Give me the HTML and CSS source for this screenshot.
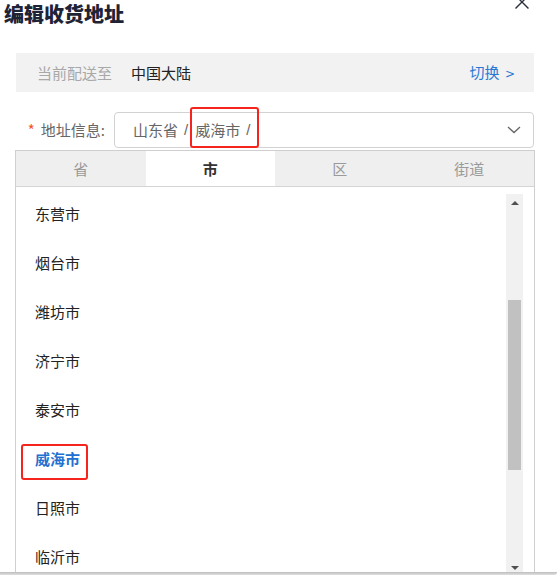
FILE: index.html
```html
<!DOCTYPE html>
<html lang="zh-CN">
<head>
<meta charset="utf-8">
<link rel="stylesheet" href="styles.css">
</head>
<body>
<div class="dialog">
  <h1 class="title">编辑收货地址</h1>
  <svg class="close" width="16" height="16" viewBox="0 0 16 16"><path d="M1.5 1.5 L14.5 14.5 M14.5 1.5 L1.5 14.5" stroke="#2a2d3a" stroke-width="1.4" fill="none"/></svg>
  <div class="content">
    <div class="bar">
      <span class="bar-label">当前配送至</span>
      <span class="bar-value">中国大陆</span>
      <span class="bar-link">切换 <span class="gt">&gt;</span></span>
    </div>
    <div class="form-row">
      <label class="label"><span class="req">*</span>地址信息:</label>
      <div class="select">
        <span class="seg">山东省</span><span class="slash">/</span><span class="hl"><span class="seg">威海市</span><span class="slash">/</span></span>
        <svg class="chev" width="14" height="8" viewBox="0 0 14 8"><path d="M1 1 L7 6.5 L13 1" stroke="#666" stroke-width="1.3" fill="none"/></svg>
      </div>
    </div>
    <div class="panel">
      <div class="tabs">
        <div class="tab">省</div>
        <div class="tab active">市</div>
        <div class="tab">区</div>
        <div class="tab">街道</div>
      </div>
      <div class="list-wrap">
        <ul class="list">
          <li class="item">东营市</li>
          <li class="item">烟台市</li>
          <li class="item">潍坊市</li>
          <li class="item">济宁市</li>
          <li class="item">泰安市</li>
          <li class="item selected"><span class="sel-box">威海市</span></li>
          <li class="item">日照市</li>
          <li class="item">临沂市</li>
        </ul>
        <div class="scrollbar">
          <span class="arrow up"></span>
          <span class="thumb"></span>
          <span class="arrow down"></span>
        </div>
      </div>
    </div>
  </div>
  <div class="bottom-edge"></div>
</div>
</body>
</html>
```

FILE: styles.css
```css
* { box-sizing: border-box; }
html, body {
  margin: 0;
  padding: 0;
  background: #fff;
}
body {
  width: 557px;
  height: 575px;
  overflow: hidden;
  font-family: "Noto Sans CJK SC", "Microsoft YaHei", sans-serif;
  color: #333;
}
.dialog {
  position: relative;
  width: 557px;
  height: 575px;
  overflow: hidden;
}
.title {
  margin: 0;
  padding: 2px 0 0 4px;
  font-size: 20px;
  line-height: 24px;
  font-weight: 900;
  color: #1f2336;
  height: 26px;
}
.close {
  position: absolute;
  top: -6px;
  right: 27px;
}
.content {
  padding: 0 23px 0 16px;
}
.bar {
  margin-top: 27px;
  height: 39px;
  background: #f2f2f2;
  display: flex;
  align-items: center;
  padding: 0 19px 0 21px;
  font-size: 15px;
  line-height: 20px;
}
.bar-label {
  color: #a8a8a8;
  margin-right: 19px;
}
.bar-value {
  color: #222;
}
.bar-link {
  margin-left: auto;
  color: #2a78d4;
}
.bar-link .gt {
  font-family: "DejaVu Sans", sans-serif;
  font-size: 12px;
  margin-left: 2px;
}
.form-row {
  margin-top: 20px;
  display: flex;
  align-items: center;
}
.label {
  width: 89px;
  margin-right: 9px;
  text-align: right;
  font-size: 15px;
  line-height: 20px;
  color: #666;
  white-space: nowrap;
}
.req {
  color: #f5542a;
  margin-right: 6px;
}
.select {
  flex: 1;
  height: 36px;
  border: 1px solid #d2d2d2;
  border-radius: 4px;
  display: flex;
  align-items: center;
  padding: 0 12px 0 18px;
  font-size: 15px;
  line-height: 20px;
  color: #666;
}
.slash {
  margin: 0 7px 0 6px;
  font-family: "Liberation Sans", sans-serif;
}
.hl {
  position: relative;
  display: flex;
  align-items: center;
}
.hl::after {
  content: "";
  position: absolute;
  left: -5px;
  right: -2px;
  top: -13px;
  bottom: -8px;
  border: 2.5px solid #f5241c;
  border-radius: 3px;
}
.chev {
  margin-left: auto;
}
.panel {
  margin: 2px -1px 0 -1px;
  border: 1px solid #cfcfcf;
  border-bottom: 0;
  height: 425px;
  overflow: hidden;
}
.tabs {
  display: flex;
  height: 36px;
  background: #efefef;
  border-bottom: 1px solid #d4d4d4;
}
.tab {
  flex: 1;
  display: flex;
  align-items: center;
  justify-content: center;
  font-size: 15px;
  color: #9a9a9a;
}
.tab.active {
  background: #fff;
  color: #333;
  font-weight: 700;
}
.list-wrap {
  display: flex;
  height: 386px;
  overflow: hidden;
}
.list {
  flex: 1;
  list-style: none;
  margin: 0;
  padding: 2px 0 0 19px;
}
.item {
  height: 49px;
  display: flex;
  align-items: center;
  font-size: 15px;
  line-height: 20px;
  color: #222;
}
.item.selected {
  color: #2270d0;
  font-weight: 700;
}
.sel-box {
  position: relative;
  display: inline-block;
  line-height: 20px;
}
.sel-box::after {
  content: "";
  position: absolute;
  left: -14px;
  right: -8px;
  top: -5px;
  bottom: -11px;
  border: 2.5px solid #f5241c;
  border-radius: 3px;
}
.scrollbar {
  width: 17px;
  margin: 7px 11px 0 0;
  background: #f1f1f1;
  display: flex;
  flex-direction: column;
  align-items: center;
}
.arrow {
  width: 0;
  height: 0;
  border-left: 4px solid transparent;
  border-right: 4px solid transparent;
}
.arrow.up {
  margin-top: 7px;
  border-bottom: 4px solid #505050;
}
.thumb {
  width: 13px;
  height: 170px;
  margin-top: 95px;
  background: #c1c1c1;
}
.arrow.down {
  margin-top: 96px;
  border-top: 4px solid #505050;
}
.bottom-edge {
  position: absolute;
  left: 0;
  right: 0;
  bottom: 0;
  height: 3px;
  background: linear-gradient(#bdbdbd, #e0e0e0);
  border-bottom-right-radius: 12px;
}
```
